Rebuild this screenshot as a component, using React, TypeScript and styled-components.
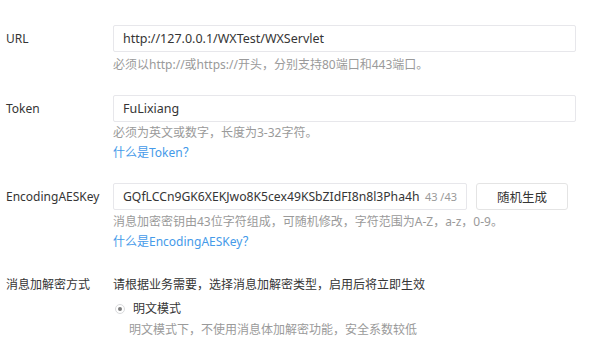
import React from "react";
import styled, { createGlobalStyle } from "styled-components";

const Global = createGlobalStyle`
  html, body { margin: 0; padding: 0; background: #fff; }
  body { font-family: "Noto Sans", "Noto Sans CJK SC", sans-serif; color: #333; }
  * { box-sizing: border-box; }
`;

const Page = styled.div`
  padding: 25px 0 0 6px;
  display: flex;
  flex-direction: column;
  width: 600px;
  height: 349px;
  overflow: hidden;
`;

const Row = styled.div<{ $top?: number }>`
  display: grid;
  grid-template-columns: 107px 1fr;
  align-items: start;
  margin-top: ${(p) => p.$top ?? 0}px;
`;

const Label = styled.div`
  font-size: 12px;
  line-height: 27px;
  color: #353535;
  height: 27px;
`;

const Field = styled.div`
  display: flex;
  flex-direction: column;
`;

const InputLine = styled.div`
  display: flex;
  gap: 9px;
  align-items: center;
`;

const InputBox = styled.div<{ $width: number }>`
  width: ${(p) => p.$width}px;
  height: 27px;
  border: 1px solid #e7e7eb;
  border-radius: 2px;
  padding: 0 9px;
  display: flex;
  align-items: center;
  font-size: 12.5px;
  color: #353535;
  white-space: nowrap;
  overflow: hidden;
`;

const Value = styled.span<{ $compact?: boolean }>`
  flex: 1;
  min-width: 0;
  overflow: hidden;
  font-size: ${(p) => (p.$compact ? 12.2 : 12.5)}px;
`;

const Counter = styled.span`
  flex-shrink: 0;
  margin-left: 4px;
  color: #9a9a9a;
  font-size: 11px;
`;

const Button = styled.div`
  width: 92px;
  height: 27px;
  border: 1px solid #e4e4e4;
  border-radius: 3px;
  display: flex;
  align-items: center;
  justify-content: center;
  font-size: 12.5px;
  color: #353535;
`;

const Hint = styled.div<{ $indent?: number; $top?: number }>`
  font-size: 12px;
  line-height: 20px;
  color: #9a9a9a;
  margin-top: ${(p) => p.$top ?? 2}px;
  padding-left: ${(p) => p.$indent ?? 0}px;
  white-space: nowrap;
`;

const Link = styled.a`
  font-size: 12px;
  line-height: 20px;
  color: #459ae9;
  text-decoration: none;
`;

const Text = styled.div`
  font-size: 12px;
  line-height: 20px;
  color: #353535;
`;

const Radio = styled.label<{ $top?: number }>`
  display: flex;
  align-items: center;
  gap: 8px;
  margin-top: ${(p) => p.$top ?? 4}px;
  padding-left: 2px;
  font-size: 12px;
  line-height: 20px;
  color: #353535;
`;

const RadioDot = styled.span<{ $checked?: boolean }>`
  width: 10px;
  height: 10px;
  border-radius: 50%;
  border: 1px solid #d9dadc;
  background: #fff;
  display: flex;
  align-items: center;
  justify-content: center;
  &::after {
    content: "";
    width: 4px;
    height: 4px;
    border-radius: 50%;
    background: ${(p) => (p.$checked ? "#7d7d7d" : "transparent")};
  }
`;

const LabelCol = styled.div`
  line-height: 20px;
  font-size: 12px;
  color: #353535;
`;

export default function App() {
  return (
    <>
      <Global />
      <Page>
        <Row>
          <Label>URL</Label>
          <Field>
            <InputBox $width={463}>
              <Value>http://127.0.0.1/WXTest/WXServlet</Value>
            </InputBox>
            <Hint $top={3}>必须以http://或https://开头，分别支持80端口和443端口。</Hint>
          </Field>
        </Row>
        <Row $top={20}>
          <Label>Token</Label>
          <Field>
            <InputBox $width={463}>
              <Value>FuLixiang</Value>
            </InputBox>
            <Hint $top={1}>必须为英文或数字，长度为3-32字符。</Hint>
            <Link href="#">什么是Token？</Link>
          </Field>
        </Row>
        <Row $top={20}>
          <Label>EncodingAESKey</Label>
          <Field>
            <InputLine>
              <InputBox $width={354}>
                <Value $compact>GQfLCCn9GK6XEKJwo8K5cex49KSbZIdFI8n8l3Pha4h</Value>
                <Counter>43 /43</Counter>
              </InputBox>
              <Button>随机生成</Button>
            </InputLine>
            <Hint $top={2}>消息加密密钥由43位字符组成，可随机修改，字符范围为A-Z，a-z，0-9。</Hint>
            <Link href="#">什么是EncodingAESKey？</Link>
          </Field>
        </Row>
        <Row $top={23}>
          <LabelCol>消息加解密方式</LabelCol>
          <Field>
            <Text>请根据业务需要，选择消息加解密类型，启用后将立即生效</Text>
            <Radio>
              <RadioDot $checked />
              明文模式
            </Radio>
            <Hint $indent={16} $top={1}>明文模式下，不使用消息体加解密功能，安全系数较低</Hint>
            <Radio $top={7}>
              <RadioDot />
              兼容模式
            </Radio>
          </Field>
        </Row>
      </Page>
    </>
  );
}
